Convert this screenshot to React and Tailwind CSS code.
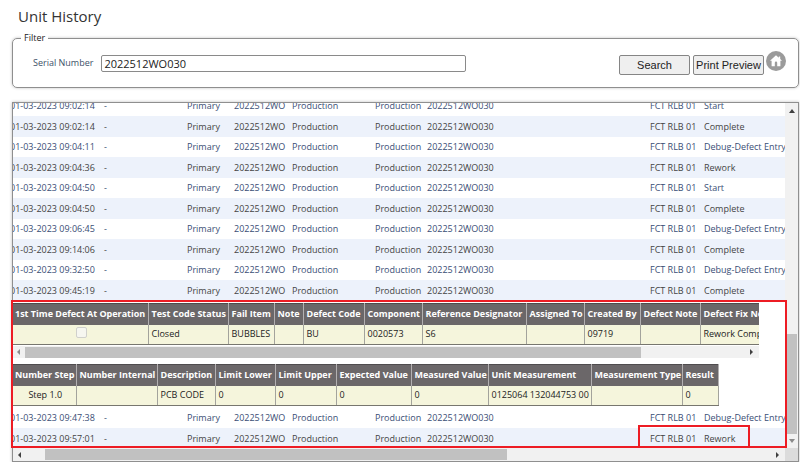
import { useState } from "react";
import clsx from "clsx";

const historyBefore = [
  { date: "01-03-2023 09:02:14", status: "Start" },
  { date: "01-03-2023 09:02:14", status: "Complete" },
  { date: "01-03-2023 09:04:11", status: "Debug-Defect Entry" },
  { date: "01-03-2023 09:04:36", status: "Rework" },
  { date: "01-03-2023 09:04:50", status: "Start" },
  { date: "01-03-2023 09:04:50", status: "Complete" },
  { date: "01-03-2023 09:06:45", status: "Debug-Defect Entry" },
  { date: "01-03-2023 09:14:06", status: "Complete" },
  { date: "01-03-2023 09:32:50", status: "Debug-Defect Entry" },
  { date: "01-03-2023 09:45:19", status: "Complete" },
];

const historyAfter = [
  { date: "01-03-2023 09:47:38", status: "Debug-Defect Entry" },
  { date: "01-03-2023 09:57:01", status: "Rework" },
];

const defectColumns = [
  { label: "1st Time Defect At Operation", width: "w-[136px]", checkbox: true },
  { label: "Test Code Status", width: "w-20", value: "Closed" },
  { label: "Fail Item", width: "w-[46px]", value: "BUBBLES" },
  { label: "Note", width: "w-[29px]", value: "" },
  { label: "Defect Code", width: "w-[61px]", value: "BU" },
  { label: "Component", width: "w-[58px]", value: "0020573" },
  { label: "Reference Designator", width: "w-[104px]", value: "S6" },
  { label: "Assigned To", width: "w-[58px]", value: "" },
  { label: "Created By", width: "w-[56px]", value: "09719" },
  { label: "Defect Note", width: "w-[60px]", value: "" },
  { label: "Defect Fix Note", width: "w-[100px]", value: "Rework Complete" },
];

const measureColumns = [
  { label: "Number Step", width: "w-16", value: "Step 1.0", center: true },
  { label: "Number Internal", width: "w-[81px]", value: "" },
  { label: "Description", width: "w-[58px]", value: "PCB CODE" },
  { label: "Limit Lower", width: "w-[60px]", value: "0" },
  { label: "Limit Upper", width: "w-[61px]", value: "0" },
  { label: "Expected Value", width: "w-[75px]", value: "0" },
  { label: "Measured Value", width: "w-[77px]", value: "0" },
  { label: "Unit Measurement", width: "w-[103px]", value: "0125064 132044753 00" },
  { label: "Measurement Type", width: "w-[91px]", value: "" },
  { label: "Result", width: "w-9", value: "0" },
];

function Arrow({ dir, muted }) {
  const points = {
    up: "0,4 3,0 6,4",
    down: "0,1 6,1 3,5",
    left: "4,0 4,6 1,3",
    right: "1,0 1,6 4,3",
  };
  return (
    <svg viewBox="0 0 6 6" className={clsx("w-1.5 h-1.5", muted ? "fill-[#8a8a8a]" : "fill-[#404040]")}>
      <polygon points={points[dir]} />
    </svg>
  );
}

function HistoryRow({ row, striped }) {
  return (
    <tr className={striped ? "h-[21px] bg-[#edf2fb] text-[#444]" : "h-5 bg-white text-[#3a4e75]"}>
      <td>{row.date}</td>
      <td className="pl-1">-</td>
      <td className="pl-3">Primary</td>
      <td className="pl-[3px]">2022512WO</td>
      <td className="pl-[3px]">Production</td>
      <td className="pl-[3px]">Production</td>
      <td className="pl-1">2022512WO030</td>
      <td></td>
      <td className="pl-1">FCT RLB 01</td>
      <td className="pl-1">{row.status}</td>
    </tr>
  );
}

function DetailTable({ columns, width }) {
  return (
    <table className={clsx("table-fixed border-collapse", width)}>
      <thead>
        <tr className="h-[21px] bg-[#6b6769] text-white">
          {columns.map((c) => (
            <th
              key={c.label}
              className={clsx("border-r border-[#b3b0b1] border-t border-t-[#4f4c4e] pl-[3px] text-left font-bold", c.width)}
            >
              {c.label}
            </th>
          ))}
        </tr>
      </thead>
      <tbody>
        <tr className="h-5 bg-[#f5f5dc] text-[#222]">
          {columns.map((c) => (
            <td
              key={c.label}
              className={clsx("border-r border-b border-r-[#a3a39c] border-b-[#77766e] pl-[3px]", c.center && "text-center")}
            >
              {c.checkbox ? (
                <input
                  type="checkbox"
                  disabled
                  aria-label={c.label}
                  className="block mx-auto w-[11px] h-[11px] -translate-y-0.5 appearance-none rounded-xs border border-[#d0d0cc] bg-[#f6f6f0]"
                />
              ) : (
                c.value
              )}
            </td>
          ))}
        </tr>
      </tbody>
    </table>
  );
}

function UnitDetails() {
  return (
    <div className="h-[107px] pl-0.5 pt-0.5">
      <div className="w-[747px] overflow-hidden">
        <DetailTable columns={defectColumns} width="w-[788px]" />
        <div className="mt-px flex h-3 items-center bg-[#f1f1f1]">
          <div className="flex w-[13px] justify-center">
            <Arrow dir="left" muted />
          </div>
          <div className="h-[11px] w-[616px] bg-[#c1c1c1]" />
          <div className="ml-auto mr-1">
            <Arrow dir="right" />
          </div>
        </div>
      </div>
      <div className="mt-1.5">
        <DetailTable columns={measureColumns} width="w-[706px]" />
      </div>
    </div>
  );
}

function HomeIcon() {
  return (
    <svg viewBox="0 0 20 20" className="w-5 h-5">
      <circle cx="10" cy="10" r="10" fill="#9b9b9b" />
      <path d="M10 4.2 4 9.8h1.6v5.4h3.2v-3.4a1.2 1.2 0 0 1 2.4 0v3.4h3.2V9.8H16l-1.8-1.7V5.4h-1.4v1.4z" fill="#fff" />
    </svg>
  );
}

export default function App() {
  const [serial, setSerial] = useState("2022512WO030");

  return (
    <div className="bg-white pl-3 pr-px pt-1.5 font-['Open_Sans','Noto_Sans',sans-serif] text-[9px] leading-3">
      <h1 className="pl-1.5 text-[15px] leading-5 text-[#333]">Unit History</h1>

      <form onSubmit={(e) => e.preventDefault()} className="mt-1.5">
        <fieldset className="h-14 rounded-[5px] border border-[#8f8f8f] pl-5 pr-3 shadow-[0_0_3px_rgba(0,0,0,0.25)]">
          <legend className="-ml-3 bg-white px-[3px] text-[#222]">Filter</legend>
          <div className="flex items-start pt-[11px]">
            <label htmlFor="serial" className="mr-2 pt-0.5 text-[#3c5068]">
              Serial Number
            </label>
            <input
              id="serial"
              value={serial}
              onChange={(e) => setSerial(e.target.value)}
              className="h-[17px] min-w-0 max-w-[365px] flex-1 rounded-xs border border-[#8a8a8a] px-0.5 text-[11px] text-[#222]"
            />
            <div className="ml-auto flex gap-[3px] font-['Liberation_Sans',Arial,sans-serif] text-[11px] text-[#222]">
              <button type="submit" className="h-5 w-[71px] rounded-xs border border-[#858585] bg-[#efefef]">
                Search
              </button>
              <button type="button" className="h-5 w-[71px] whitespace-nowrap rounded-xs border border-[#858585] bg-[#efefef]">
                Print Preview
              </button>
            </div>
            <button type="button" aria-label="Home" className="-mt-1 ml-0.5">
              <HomeIcon />
            </button>
          </div>
        </fieldset>
      </form>

      <section className="mt-3.5 border border-[#8f8f8f] shadow-[0_0_3px_rgba(0,0,0,0.25)]">
        <div className="relative flex">
          <div className="h-[345px] min-w-0 flex-1 overflow-hidden">
            <table className="-ml-[3px] -mt-[7px] w-[790px] table-fixed whitespace-nowrap text-left">
              <colgroup>
                <col className="w-[90px]" />
                <col className="w-[75px]" />
                <col className="w-[56px]" />
                <col className="w-[58px]" />
                <col className="w-[83px]" />
                <col className="w-[51px]" />
                <col className="w-[108px]" />
                <col className="w-[115px]" />
                <col className="w-[54px]" />
                <col className="w-[100px]" />
              </colgroup>
              <tbody>
                {historyBefore.map((row, i) => (
                  <HistoryRow key={i} row={row} striped={i % 2 === 1} />
                ))}
                <tr>
                  <td colSpan={10}>
                    <UnitDetails />
                  </td>
                </tr>
                {historyAfter.map((row, i) => (
                  <HistoryRow key={i} row={row} striped={i % 2 === 1} />
                ))}
              </tbody>
            </table>
          </div>

          <div className="flex w-[13px] flex-col items-center bg-[#f1f1f1] pb-1 pt-1.5">
            <Arrow dir="up" />
            <div className="mb-1 mt-auto h-[100px] w-[11px] bg-[#c1c1c1]" />
            <Arrow dir="down" muted />
          </div>

          {/* highlighted defect block and final status */}
          <div className="pointer-events-none absolute -left-0.5 bottom-0 right-[11px] h-[148px] border-2 border-[#ed1c24]" />
          <div className="pointer-events-none absolute bottom-0 right-[48px] h-[23px] w-28 border-2 border-[#ed1c24]" />
        </div>

        <div className="flex h-[13px] items-center bg-[#f1f1f1]">
          <div className="ml-1">
            <Arrow dir="left" />
          </div>
          <div className="ml-[22px] h-[11px] w-[462px] bg-[#c1c1c1]" />
          <div className="ml-auto mr-1">
            <Arrow dir="right" />
          </div>
          <div className="h-full w-[13px] bg-[#dcdcdc]" />
        </div>
      </section>
    </div>
  );
}
